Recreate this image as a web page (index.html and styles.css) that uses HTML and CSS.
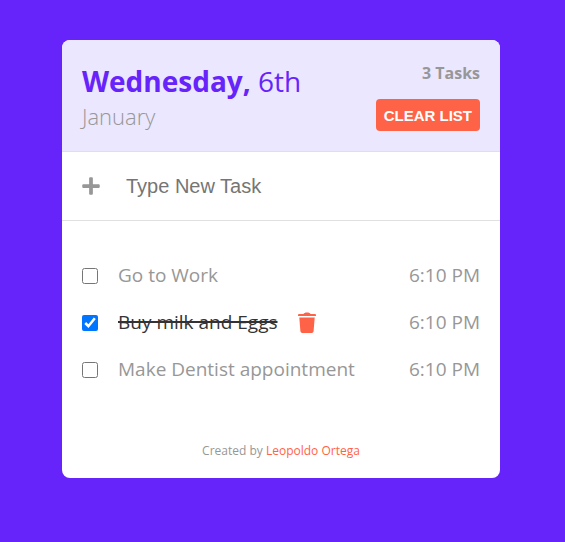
FILE: index.html
```html
<!DOCTYPE html>
<html lang="en">
<head>
  <meta charset="utf-8">
  <meta name="viewport" content="width=device-width, initial-scale=1">
  <title>Tasks</title>
  <link rel="stylesheet" href="styles.css">
</head>
<body>
  <main class="card">
    <header class="header">
      <div class="date">
        <h1 class="day"><strong>Wednesday,</strong> 6th</h1>
        <p class="month">January</p>
      </div>
      <div class="summary">
        <p class="count">3 Tasks</p>
        <button class="clear" type="button">CLEAR LIST</button>
      </div>
    </header>
    <form class="new-task">
      <label class="plus" for="new-task" aria-label="New task">
        <svg viewBox="0 0 448 512" width="18" height="20" aria-hidden="true"><path fill="currentColor" d="M416 208H272V64c0-17.67-14.33-32-32-32h-32c-17.67 0-32 14.33-32 32v144H32c-17.67 0-32 14.33-32 32v32c0 17.67 14.33 32 32 32h144v144c0 17.67 14.33 32 32 32h32c17.67 0 32-14.33 32-32V304h144c17.67 0 32-14.33 32-32v-32c0-17.67-14.33-32-32-32z"/></svg>
      </label>
      <input class="field" id="new-task" type="text" placeholder="Type New Task">
    </form>
    <ul class="tasks">
      <li class="task">
        <input class="check" type="checkbox" id="task-1">
        <label class="name" for="task-1">Go to Work</label>
        <time class="time">6:10 PM</time>
      </li>
      <li class="task">
        <input class="check" type="checkbox" id="task-2" checked>
        <label class="name" for="task-2">Buy milk and Eggs</label>
        <button class="delete" type="button" aria-label="Delete task">
          <svg viewBox="0 0 18 22" width="18" height="22" aria-hidden="true"><path fill="currentColor" d="M5.500 2C6 1 7 .5 9 .5s3 .5 3.500 1.500H17a1 1 0 0 1 1 1v1H0V3a1 1 0 0 1 1-1zM1.300 5.500h15.400l-1.100 13.700a2 2 0 0 1-2 1.800H4.400a2 2 0 0 1-2-1.800z"/></svg>
        </button>
        <time class="time">6:10 PM</time>
      </li>
      <li class="task">
        <input class="check" type="checkbox" id="task-3">
        <label class="name" for="task-3">Make Dentist appointment</label>
        <time class="time">6:10 PM</time>
      </li>
    </ul>
    <footer class="footer">Created by <a class="author" href="#">Leopoldo Ortega</a></footer>
  </main>
</body>
</html>
```

FILE: styles.css
```css
* {
  box-sizing: border-box;
  margin: 0;
  padding: 0;
}

body {
  min-height: 100vh;
  padding: 40px 23px 40px 20px;
  background: #6724fa;
  color: #979797;
  font-family: "Segoe UI", "Open Sans", "Noto Sans", sans-serif;
  font-size: 19px;
  line-height: 27px;
}

.card {
  max-width: 438px;
  margin: 0 auto;
  overflow: hidden;
  border-radius: 8px;
  background: #fff;
}

.header {
  display: flex;
  justify-content: space-between;
  padding: 20px;
  border-bottom: 1px solid #e0e0e0;
  background: #eae7ff;
}

.day {
  color: #6724fa;
  font-size: 28px;
  font-weight: 400;
  line-height: 42px;
}

.month {
  font-size: 22px;
  font-weight: 300;
  line-height: 29px;
}

.summary {
  display: flex;
  flex-direction: column;
  align-items: flex-end;
  gap: 13px;
}

.count {
  font-size: 16px;
  font-weight: 700;
  line-height: 26px;
}

.clear {
  height: 32px;
  padding: 0 8px;
  border: 0;
  border-radius: 4px;
  background: #ff6347;
  color: #fff;
  font: 700 15px "Liberation Sans", Arial, sans-serif;
}

.new-task {
  display: flex;
  align-items: center;
  gap: 24px;
  padding: 10px 20px;
  border-bottom: 1px solid #e0e0e0;
}

.plus,
.plus svg {
  display: block;
}

.field {
  flex: 1;
  min-width: 0;
  height: 48px;
  padding: 0 2px;
  border: 0;
  outline: 0;
  background: none;
  font: 20px "Liberation Sans", Arial, sans-serif;
}

.field::placeholder {
  color: #757575;
}

.tasks {
  display: grid;
  gap: 20px;
  padding: 41px 20px;
  list-style: none;
}

.task {
  display: flex;
  align-items: center;
  gap: 20px;
}

.check {
  width: 16px;
  height: 16px;
  accent-color: #0075ff;
}

.check:checked + .name {
  color: #333;
  text-decoration: line-through 2px;
}

.delete {
  display: flex;
  border: 0;
  background: none;
  color: #ff6347;
}

.time {
  margin-left: auto;
}

.footer {
  padding: 18px 20px;
  font-size: 12px;
  line-height: 18px;
  text-align: center;
}

.author {
  color: #ff6347;
  text-decoration: none;
}
```
